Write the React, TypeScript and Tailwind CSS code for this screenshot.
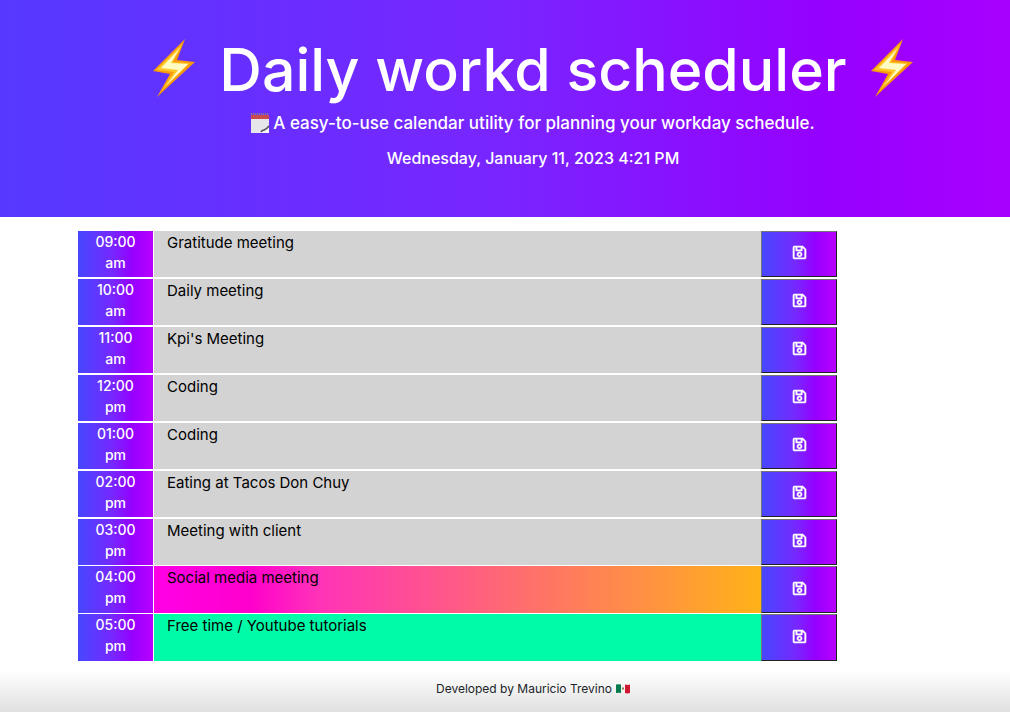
import { FaRegSave } from "react-icons/fa";

type Status = "past" | "present" | "future";

const rows: { time: string; period: string; task: string; status: Status }[] = [
  { time: "09:00", period: "am", task: "Gratitude meeting", status: "past" },
  { time: "10:00", period: "am", task: "Daily meeting", status: "past" },
  { time: "11:00", period: "am", task: "Kpi's Meeting", status: "past" },
  { time: "12:00", period: "pm", task: "Coding", status: "past" },
  { time: "01:00", period: "pm", task: "Coding", status: "past" },
  { time: "02:00", period: "pm", task: "Eating at Tacos Don Chuy", status: "past" },
  { time: "03:00", period: "pm", task: "Meeting with client", status: "past" },
  { time: "04:00", period: "pm", task: "Social media meeting", status: "present" },
  { time: "05:00", period: "pm", task: "Free time / Youtube tutorials", status: "future" },
];

const taskBackground: Record<Status, string> = {
  past: "bg-[#d3d3d3]",
  present: "bg-[linear-gradient(90deg,#ff00e6_0%,#ff00cc_16%,#ff33b8_27%,#ffb218_100%)]",
  future: "bg-[#00fba8]",
};

const rowSize: Record<Status, string> = {
  past: "mt-[2px] h-[46px] first:mt-0",
  present: "mt-px h-[47px]",
  future: "mt-px h-[47px]",
};

function Bolt() {
  return (
    <svg viewBox="0 0 42 58" className="mb-1 h-[58px] w-[42px] shrink-0" aria-hidden="true">
      <path d="M32 0 0 32l17 3L4 58l38-35-18-2z" fill="#f7990a" />
      <path d="M30 4 3 31l18 2L8 52l29-28-17-1z" fill="#ffc727" />
      <path d="M27 9 8 29l17 2-12 16 22-22-17-1z" fill="#fffcc4" />
    </svg>
  );
}

function Notepad() {
  return (
    <svg viewBox="0 0 18 20" className="h-5 w-[18px] shrink-0" aria-hidden="true">
      <path d="M0 2h18v18H0z" fill="#e6e5ea" />
      <path d="M0 2h18v4H0z" fill="#c84b50" />
      <path d="M0 1h18" stroke="#8d7a9c" strokeWidth="2" strokeDasharray="1 1" />
      <path d="M18 13v7h-8q6-1 8-7" fill="#f8f8fa" />
      <path d="M10 19q1-2 3-2 3-1 5-4" fill="none" stroke="#55515a" strokeWidth="1.600" />
    </svg>
  );
}

function MexicoFlag() {
  return (
    <svg viewBox="0 0 14 10" className="h-[10px] w-[14px]" aria-hidden="true">
      <path d="M0 .5Q3-.2 5 .5V9Q3 8.500 0 9z" fill="#087a50" />
      <path d="M5 .5h4V9H5z" fill="#f4f2ee" />
      <path d="M9 .5q3 .8 5 0V9q-3 .8-5 0z" fill="#ce1832" />
      <path d="M6 4l1-1 1 1v1L7 6 6 5z" fill="#8d7953" />
    </svg>
  );
}

export default function App() {
  return (
    <div className="flex min-h-screen flex-col bg-white font-[Inter,'Open_Sans',sans-serif] text-black">
      <header className="flex flex-col items-center bg-[linear-gradient(90deg,#5639ff_0%,#7925ff_50%,#9600ff_82%,#a800ff_100%)] pt-9 pb-[47px] pl-14 font-medium text-white">
        <h1 className="flex items-center gap-6 whitespace-nowrap text-[59px] leading-[68px] font-medium">
          <Bolt />
          Daily workd scheduler
          <Bolt />
        </h1>
        <p className="mt-[7px] flex items-center gap-1 text-[17px] leading-6">
          <Notepad />
          A easy-to-use calendar utility for planning your workday schedule.
        </p>
        <p className="mt-[11px] text-base leading-6">Wednesday, January 11, 2023 4:21 PM</p>
      </header>

      <main className="pt-[14px] pr-[173px] pl-[78px]">
        {rows.map((row) => (
          <div key={row.time} className={`grid grid-cols-[75px_1fr_76px] ${rowSize[row.status]}`}>
            <label
              htmlFor={`task-${row.time}`}
              className="flex flex-col items-center bg-[linear-gradient(90deg,#4747ff_0%,#7529ff_45%,#9600ff_72%,#b800ff_100%)] text-sm leading-[21px] font-medium text-white"
            >
              <span>{row.time}</span>
              <span>{row.period}</span>
            </label>
            <textarea
              id={`task-${row.time}`}
              defaultValue={row.task}
              className={`ml-px block h-full resize-none overflow-hidden px-[13px] text-[15px] leading-[23px] text-black outline-none ${taskBackground[row.status]}`}
            />
            <button
              type="button"
              aria-label={`Save ${row.time} ${row.period}`}
              className="flex items-center justify-center border border-t-[#767676] border-r-[#212121] border-b-[#212121] border-l-[#767676] bg-[linear-gradient(90deg,#4747ff_0%,#7529ff_45%,#9600ff_72%,#b800ff_100%)] pb-[3px] text-white"
            >
              <FaRegSave size={15} stroke="currentColor" strokeWidth={16} />
            </button>
          </div>
        ))}
      </main>

      <footer className="flex flex-1 items-start justify-center bg-[linear-gradient(180deg,#fff_20%,#e0e0e0_100%)] pt-[18px] pb-3 pl-14 text-xs leading-5 text-[#212529]">
        <div className="flex items-center gap-1">
          Developed by Mauricio Trevino
          <MexicoFlag />
        </div>
      </footer>
    </div>
  );
}
